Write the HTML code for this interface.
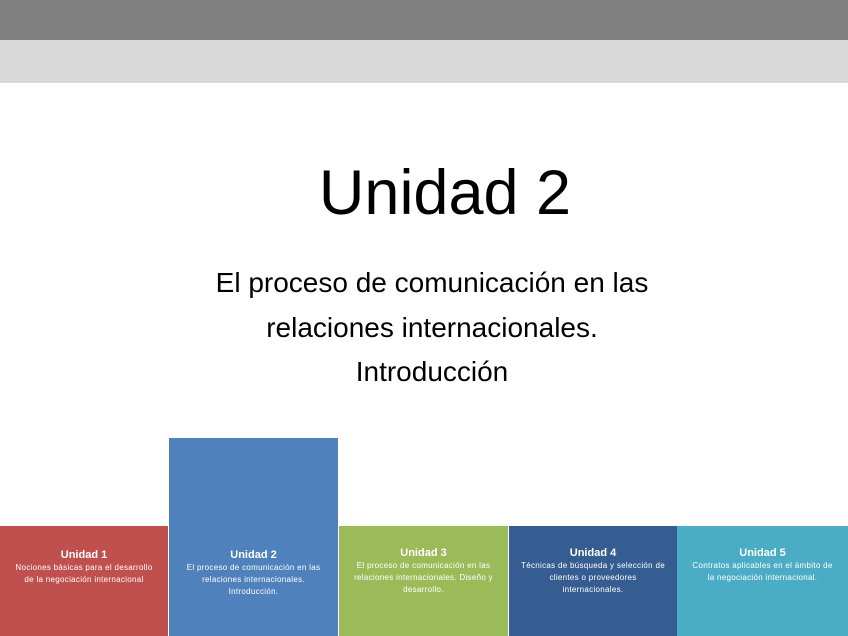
<!DOCTYPE html>
<html><head><meta charset="utf-8"><style>
*{margin:0;padding:0;box-sizing:border-box}
body{width:848px;height:636px;position:relative;background:#fff;overflow:hidden;font-family:"Liberation Sans",Arial,sans-serif}
.b{position:absolute}
.t{position:absolute;left:0;width:848px;text-align:center;color:#000}
.box{position:absolute;color:#fff;text-align:center;font-size:8px;line-height:12px;letter-spacing:0.3px}
.box b{display:block;font-size:11px;line-height:13px;letter-spacing:0}
</style></head><body>
<div class="b" style="left:0;top:0;width:848px;height:40px;background:#808080"></div>
<div class="b" style="left:0;top:40px;width:848px;height:43px;background:#d9d9d9"></div>
<div class="t" style="top:157px;font-size:63px;line-height:72px;padding-left:42px">Unidad 2</div>
<div class="t" style="top:261px;font-size:28px;line-height:44.5px;padding-left:16px">El proceso de comunicación en las<br>relaciones internacionales.<br>Introducción</div>
<div class="box" style="left:0;top:526px;width:168px;height:110px;background:#c0504d;padding-top:23px"><b>Unidad 1</b>Nociones básicas para el desarrollo<br>de la negociación internacional</div>
<div class="box" style="left:169px;top:438px;width:169px;height:198px;background:#4f81bd;padding-top:111px"><b>Unidad 2</b>El proceso de comunicación en las<br>relaciones internacionales.<br>Introducción.</div>
<div class="box" style="left:339px;top:526px;width:169px;height:110px;background:#9bbb59;padding-top:21px"><b>Unidad 3</b>El proceso de comunicación en las<br>relaciones internacionales. Diseño y<br>desarrollo.</div>
<div class="box" style="left:509px;top:526px;width:168px;height:110px;background:#355d91;padding-top:21px"><b>Unidad 4</b>Técnicas de búsqueda y selección de<br>clientes o proveedores<br>internacionales.</div>
<div class="box" style="left:677px;top:526px;width:171px;height:110px;background:#4bacc6;padding-top:21px"><b>Unidad 5</b>Contratos aplicables en el ámbito de<br>la negociación internacional.</div>
</body></html>
